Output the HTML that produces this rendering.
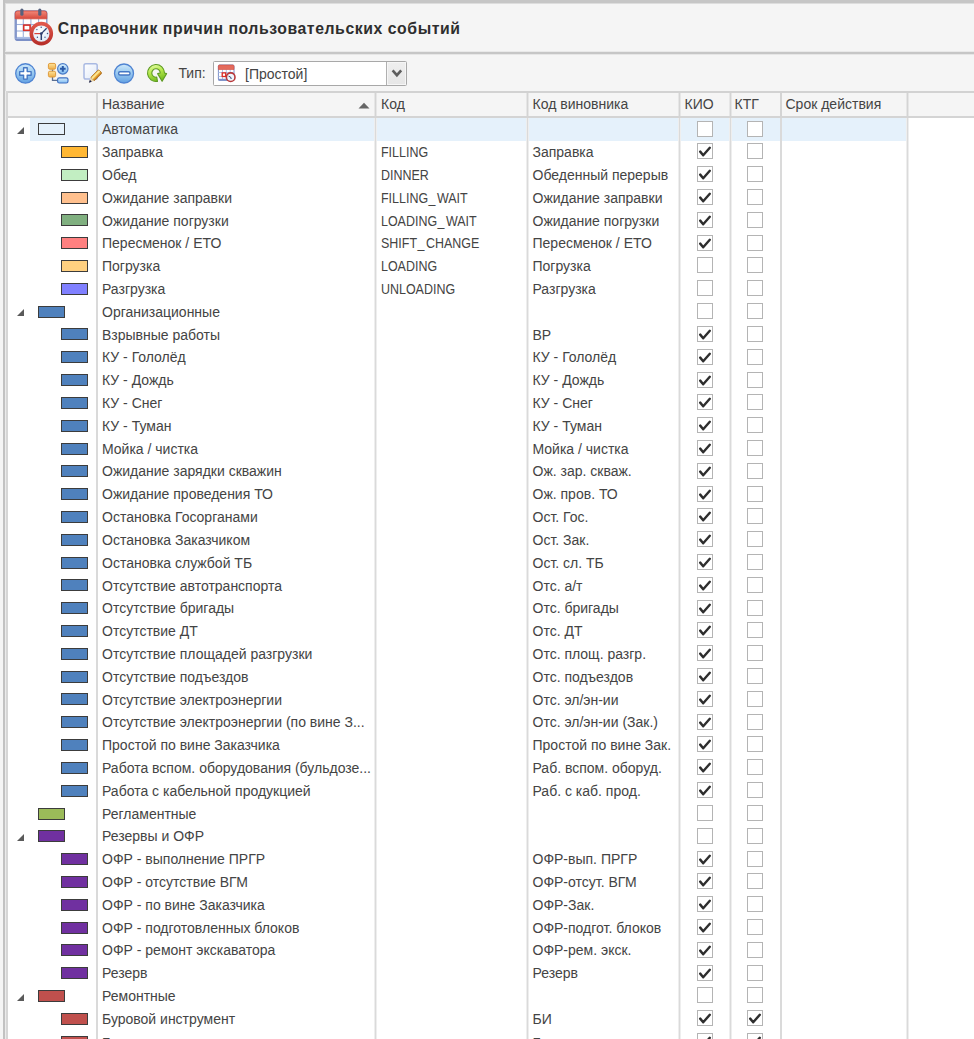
<!DOCTYPE html>
<html><head><meta charset="utf-8">
<style>
html,body{margin:0;padding:0}
body{width:974px;height:1039px;overflow:hidden;position:relative;background:#f5f5f5;font-family:"Liberation Sans",sans-serif;color:#333}
.a{position:absolute}
.p{position:absolute}
#title{position:absolute;left:57.8px;top:19.2px;font-weight:bold;font-size:15.8px;letter-spacing:0.56px;line-height:20px;color:#2e2e2e;white-space:nowrap}
#tip{position:absolute;left:178.4px;top:65px;font-size:14px;line-height:17px;color:#444}
#combo{position:absolute;left:213px;top:61px;width:192px;height:23px;border:1px solid #a8a8a8;background:#fff}
#combo .txt{position:absolute;left:31px;top:3.5px;font-size:14px;line-height:17px;color:#444}
#combo{border-radius:1.5px}
#combo .btn{position:absolute;left:172px;top:0;width:18.5px;height:23px;border-left:1.5px solid #b0b0b0;background:linear-gradient(#efefef,#e6e6e6);box-shadow:inset 0 0 0 1px #f6f6f6}
.hd{position:absolute;top:96px;font-size:14px;line-height:17px;color:#444;white-space:nowrap}
.selbg{position:absolute;left:30px;width:877px;height:23.3px;background:#e5f1fb}
.t{position:absolute;font-size:14px;line-height:23px;height:23px;color:#444;white-space:nowrap}
.code{transform:scaleX(0.89);transform-origin:0 0}
.us{letter-spacing:1.6px;margin-left:0.6px}
.box{position:absolute;width:25.3px;height:10px;border:1.2px solid #3c3c3c}
.tri{position:absolute;left:16.7px;width:0;height:0;border-left:7.5px solid transparent;border-bottom:7.2px solid #5a5a5a}
.cb{position:absolute;width:14px;height:14px;border:1.2px solid #b4b4b4;background:#fff}
.cb svg{position:absolute;left:-1px;top:-1px}
</style></head><body>
<div class="p" style="left:0px;top:0px;width:3px;height:1039px;background:#f5f5f5"></div>
<div class="p" style="left:3px;top:0px;width:971px;height:3px;background:#c6c6c6"></div>
<div class="p" style="left:3px;top:3px;width:971px;height:1px;background:#dddddd"></div>
<div class="p" style="left:3px;top:0px;width:2px;height:1039px;background:#c2c2c2"></div>
<div class="p" style="left:5px;top:4px;width:1px;height:87px;background:#dedede"></div>
<div class="p" style="left:5px;top:51px;width:969px;height:1px;background:#e9e9e9"></div>
<div class="p" style="left:5px;top:52px;width:969px;height:2px;background:#c6c6c6"></div>
<div class="p" style="left:5px;top:54px;width:969px;height:1px;background:#e6e6e6"></div>

<!-- title icon -->
<svg class="a" style="left:10px;top:5px" width="48" height="44" viewBox="0 0 48 44">
  <defs>
    <linearGradient id="calg" x1="0" y1="0" x2="0" y2="1"><stop offset="0" stop-color="#f2887a"/><stop offset="1" stop-color="#d6483c"/></linearGradient>
    <radialGradient id="clf" cx="0.45" cy="0.4" r="0.65"><stop offset="0" stop-color="#ffffff"/><stop offset="1" stop-color="#d6e6f6"/></radialGradient>
    <linearGradient id="ring" x1="0" y1="0" x2="0" y2="1"><stop offset="0" stop-color="#e0574c"/><stop offset="1" stop-color="#b8302a"/></linearGradient>
  </defs>
  <rect x="5.2" y="6" width="31.6" height="29.3" rx="2.5" fill="#fff" stroke="#7f93c8" stroke-width="1.3"/>
  <g stroke="#9fb2dc" stroke-width="1.1">
    <line x1="5.5" y1="19.5" x2="36.5" y2="19.5"/><line x1="5.5" y1="26" x2="36.5" y2="26"/>
    <line x1="13.3" y1="13.5" x2="13.3" y2="33"/><line x1="20.9" y1="13.5" x2="20.9" y2="33"/><line x1="28.6" y1="13.5" x2="28.6" y2="33"/>
  </g>
  <rect x="5.2" y="31.9" width="31.6" height="2" fill="#a9bde6"/><rect x="5.2" y="33.8" width="31.6" height="1.6" rx="0.8" fill="#7a8ec6"/>
  <rect x="5.2" y="13.5" width="1.7" height="20" fill="#8194c9"/>
  <path d="M5.2 13.8 V8.5 a2.5 2.5 0 0 1 2.5 -2.5 H34.3 a2.5 2.5 0 0 1 2.5 2.5 V13.8z" fill="url(#calg)" stroke="#d24a3e" stroke-width="0.8"/>
  <rect x="13.7" y="20.1" width="6.4" height="5.2" fill="none" stroke="#d8312a" stroke-width="1.6"/>
  <rect x="10.3" y="3.6" width="3.2" height="7.2" rx="1.6" fill="#56617e"/>
  <rect x="28.2" y="3.6" width="3.2" height="7.2" rx="1.6" fill="#56617e"/>
  <circle cx="31.3" cy="28.6" r="10" fill="url(#clf)" stroke="url(#ring)" stroke-width="3.6"/>
  <g fill="#3e5285"><circle cx="31.2" cy="22.2" r="0.75"/><circle cx="37.5" cy="28.6" r="0.75"/><circle cx="35" cy="32.3" r="0.7"/><circle cx="27.4" cy="32.3" r="0.7"/><circle cx="26.9" cy="24.6" r="0.7"/></g>
  <line x1="31.3" y1="28.6" x2="36.6" y2="23.2" stroke="#2f4170" stroke-width="1.3"/>
  <line x1="31.3" y1="28.6" x2="31.3" y2="35" stroke="#2f4170" stroke-width="1.5"/>
  <line x1="24.4" y1="28.6" x2="31.3" y2="28.6" stroke="#d8423a" stroke-width="1.2"/>
  <circle cx="31.3" cy="28.6" r="1.4" fill="#2f4170"/>
</svg>
<div id="title">Справочник причин пользовательских событий</div>

<!-- toolbar icons -->
<svg class="a" style="left:12px;top:60px" width="28" height="28" viewBox="0 0 28 28">
  <defs><linearGradient id="bl" x1="0" y1="0" x2="0" y2="1"><stop offset="0" stop-color="#cfe9fb"/><stop offset="0.45" stop-color="#9ccbf0"/><stop offset="1" stop-color="#62a0e2"/></linearGradient></defs>
  <circle cx="13.4" cy="13.45" r="9.7" fill="url(#bl)" stroke="#4f84d2" stroke-width="1.3"/>
  <path d="M11.6 7.7h3.6v3.9h3.9v3.6h-3.9v3.9h-3.6v-3.9h-3.9v-3.6h3.9z" fill="#fff" stroke="#4477c4" stroke-width="1.4" stroke-linejoin="round"/>
</svg>
<svg class="a" style="left:45px;top:60px" width="28" height="28" viewBox="0 0 28 28">
  <defs><linearGradient id="or" x1="0" y1="0" x2="0" y2="1"><stop offset="0" stop-color="#fde39a"/><stop offset="1" stop-color="#eeae4a"/></linearGradient>
  <linearGradient id="bl2" x1="0" y1="0" x2="0" y2="1"><stop offset="0" stop-color="#d6effd"/><stop offset="1" stop-color="#80baf0"/></linearGradient></defs>
  <path d="M7.5 9.5 V20.3 H12.5" fill="none" stroke="#5b6f92" stroke-width="1.3"/>
  <rect x="3.4" y="3.4" width="7.2" height="5.8" rx="1.5" fill="url(#or)" stroke="#e09a38" stroke-width="1"/>
  <rect x="3.4" y="11.2" width="7.2" height="5.8" rx="1.5" fill="url(#or)" stroke="#e09a38" stroke-width="1"/>
  <circle cx="17.8" cy="8.85" r="5.2" fill="url(#bl2)" stroke="#4a7cc8" stroke-width="1.2"/>
  <path d="M17.8 6v5.7M14.95 8.85h5.7" stroke="#2a5aa8" stroke-width="2"/>
  <rect x="12.6" y="17.8" width="10.4" height="5.2" rx="1.8" fill="url(#bl2)" stroke="#3f70c2" stroke-width="1.2"/>
</svg>
<svg class="a" style="left:78px;top:60px" width="28" height="28" viewBox="0 0 28 28">
  <defs><linearGradient id="pg" x1="0" y1="0" x2="1" y2="1"><stop offset="0" stop-color="#ffffff"/><stop offset="1" stop-color="#dfe8f7"/></linearGradient>
  <linearGradient id="pen" x1="0" y1="0" x2="0" y2="1"><stop offset="0" stop-color="#e8a838"/><stop offset="0.35" stop-color="#fff4a8"/><stop offset="0.6" stop-color="#eeb040"/><stop offset="1" stop-color="#b86a10"/></linearGradient></defs>
  <rect x="6" y="3.7" width="13.2" height="15.4" rx="1.8" fill="url(#pg)" stroke="#a9b9e2" stroke-width="1.5"/>
  <g transform="translate(11 22.6) rotate(-45)">
    <rect x="4.6" y="-2.5" width="11.4" height="5" rx="1.4" fill="url(#pen)" stroke="#a86a18" stroke-width="0.7"/>
    <path d="M4.8 -2.5 L0 0 L4.8 2.5z" fill="#e9d6ae"/>
    <path d="M2.6 -1.35 L-0.2 0 L2.6 1.35z" fill="#1b2350"/>
  </g>
</svg>
<svg class="a" style="left:110px;top:60px" width="28" height="28" viewBox="0 0 28 28">
  <circle cx="14" cy="13.5" r="9.5" fill="url(#bl)" stroke="#4f84d2" stroke-width="1.3"/>
  <rect x="8.6" y="11.7" width="11.4" height="3.3" rx="1.5" fill="#fff" stroke="#4477c4" stroke-width="1.4"/>
</svg>
<svg class="a" style="left:143px;top:60px" width="28" height="26" viewBox="0 0 28 26">
  <defs><linearGradient id="gr" x1="0" y1="0" x2="0.3" y2="1"><stop offset="0" stop-color="#e8ffb0"/><stop offset="0.5" stop-color="#b6e84c"/><stop offset="1" stop-color="#78be22"/></linearGradient></defs>
  <path d="M14.48 21.37 A8.5 8.5 0 1 1 21.5 13 L23.6 13.6 L19.1 21.3 L14.6 13.6 L17.2 13 A4.2 4.2 0 1 0 13.73 17.14 Z" fill="url(#gr)" stroke="#5d9a22" stroke-width="1.1" stroke-linejoin="round"/>
</svg>
<div id="tip">Тип:</div>
<div id="combo">
  <svg class="a" style="left:0px;top:0px" width="26" height="24" viewBox="0 0 26 24">
    <rect x="4.4" y="3" width="15.6" height="15.4" rx="1.2" fill="#fff" stroke="#7d90c8" stroke-width="1"/>
    <g stroke="#a8bde6" stroke-width="0.9"><line x1="4.5" y1="10.5" x2="20" y2="10.5"/><line x1="4.5" y1="14.5" x2="20" y2="14.5"/><line x1="8.5" y1="7.5" x2="8.5" y2="18"/><line x1="12.3" y1="7.5" x2="12.3" y2="18"/><line x1="16.2" y1="7.5" x2="16.2" y2="18"/></g>
    <rect x="4.4" y="16.8" width="15.6" height="1.8" fill="#7d90c8"/>
    <path d="M4.4 7.5 V4.2 a1.2 1.2 0 0 1 1.2 -1.2 H18.8 a1.2 1.2 0 0 1 1.2 1.2 V7.5z" fill="#e46a5c" stroke="#d04a3e" stroke-width="0.6"/>
    <rect x="8.2" y="10.9" width="3.5" height="3.6" fill="none" stroke="#e02a20" stroke-width="1.3"/>
    <circle cx="16.7" cy="15.2" r="4.3" fill="#eef6fc" stroke="#b8383a" stroke-width="1.6"/>
    <path d="M14.6 14.2 L16.7 15.2 L17.2 17" fill="none" stroke="#2f4170" stroke-width="1"/>
  </svg>
  <div class="txt">[Простой]</div>
  <div class="btn"><svg class="a" style="left:3.5px;top:7px" width="12" height="9" viewBox="0 0 12 9"><path d="M1.6 1.4L5.9 6.2L10.2 1.4" fill="none" stroke="#5e5e5e" stroke-width="2.6"/></svg></div>
</div>

<!-- grid -->
<div class="p" style="left:8px;top:118px;width:966px;height:921px;background:#ffffff"></div>
<div class="p" style="left:8px;top:93px;width:966px;height:23px;background:#f5f5f5"></div>
<div class="p" style="left:6px;top:91px;width:968px;height:2px;background:#d2d2d2"></div>
<div class="p" style="left:5px;top:91px;width:1px;height:948px;background:#ebebeb"></div>
<div class="p" style="left:6px;top:91px;width:2px;height:948px;background:#d6d6d6"></div>
<div class="p" style="left:8px;top:116px;width:966px;height:2px;background:#d4d4d4"></div>
<div class="p" style="left:96px;top:93px;width:2px;height:23px;background:#d4d4d4"></div>
<div class="p" style="left:375px;top:93px;width:1px;height:23px;background:#d4d4d4"></div>
<div class="p" style="left:374px;top:93px;width:1px;height:23px;background:#e6e6e6"></div>
<div class="p" style="left:376px;top:93px;width:1px;height:23px;background:#e6e6e6"></div>
<div class="p" style="left:527px;top:93px;width:1px;height:23px;background:#d4d4d4"></div>
<div class="p" style="left:526px;top:93px;width:1px;height:23px;background:#e6e6e6"></div>
<div class="p" style="left:528px;top:93px;width:1px;height:23px;background:#e6e6e6"></div>
<div class="p" style="left:679px;top:93px;width:1px;height:23px;background:#d4d4d4"></div>
<div class="p" style="left:678px;top:93px;width:1px;height:23px;background:#e6e6e6"></div>
<div class="p" style="left:680px;top:93px;width:1px;height:23px;background:#e6e6e6"></div>
<div class="p" style="left:730px;top:93px;width:1px;height:23px;background:#d4d4d4"></div>
<div class="p" style="left:729px;top:93px;width:1px;height:23px;background:#e6e6e6"></div>
<div class="p" style="left:731px;top:93px;width:1px;height:23px;background:#e6e6e6"></div>
<div class="p" style="left:780px;top:93px;width:2px;height:23px;background:#d4d4d4"></div>
<div class="p" style="left:907px;top:93px;width:1px;height:23px;background:#d4d4d4"></div>
<div class="p" style="left:906px;top:93px;width:1px;height:23px;background:#e6e6e6"></div>
<div class="p" style="left:908px;top:93px;width:1px;height:23px;background:#e6e6e6"></div>
<div class="hd" style="left:102px">Название</div>
<svg class="a" style="left:358px;top:101.5px" width="12" height="7" viewBox="0 0 12 7"><path d="M0.5 6.5L6 0.8L11.5 6.5z" fill="#666"/></svg>
<div class="hd" style="left:381px">Код</div>
<div class="hd" style="left:532.5px">Код виновника</div>
<div class="hd" style="left:684.5px">КИО</div>
<div class="hd" style="left:734.5px">КТГ</div>
<div class="hd" style="left:785.5px">Срок действия</div>
<div class="selbg" style="top:117.80px"></div><div class="tri" style="top:127.00px"></div><div class="box" style="left:38px;top:123.20px;background:transparent"></div><div class="t" style="left:102px;top:118.30px">Автоматика</div><div class="cb" style="left:697px;top:120.60px"></div><div class="cb" style="left:746.8px;top:120.60px"></div>
<div class="box" style="left:61px;top:146.01px;background:#ffb733"></div><div class="t" style="left:102px;top:141.11px">Заправка</div><div class="t code" style="left:381px;top:141.11px">FILLING</div><div class="t" style="left:532.5px;top:141.11px">Заправка</div><div class="cb" style="left:697px;top:143.41px"><svg width="16" height="16" viewBox="0 0 16 16"><path d="M3.2 8.6 L6.2 12.2 L12.8 4.8" fill="none" stroke="#2e2e2e" stroke-width="2.45" stroke-linecap="round" stroke-linejoin="round"/></svg></div><div class="cb" style="left:746.8px;top:143.41px"></div>
<div class="box" style="left:61px;top:168.82px;background:#c2eec2"></div><div class="t" style="left:102px;top:163.92px">Обед</div><div class="t code" style="left:381px;top:163.92px">DINNER</div><div class="t" style="left:532.5px;top:163.92px">Обеденный перерыв</div><div class="cb" style="left:697px;top:166.22px"><svg width="16" height="16" viewBox="0 0 16 16"><path d="M3.2 8.6 L6.2 12.2 L12.8 4.8" fill="none" stroke="#2e2e2e" stroke-width="2.45" stroke-linecap="round" stroke-linejoin="round"/></svg></div><div class="cb" style="left:746.8px;top:166.22px"></div>
<div class="box" style="left:61px;top:191.63px;background:#ffc08e"></div><div class="t" style="left:102px;top:186.73px">Ожидание заправки</div><div class="t code" style="left:381px;top:186.73px">FILLING<span class="us">_</span>WAIT</div><div class="t" style="left:532.5px;top:186.73px">Ожидание заправки</div><div class="cb" style="left:697px;top:189.03px"><svg width="16" height="16" viewBox="0 0 16 16"><path d="M3.2 8.6 L6.2 12.2 L12.8 4.8" fill="none" stroke="#2e2e2e" stroke-width="2.45" stroke-linecap="round" stroke-linejoin="round"/></svg></div><div class="cb" style="left:746.8px;top:189.03px"></div>
<div class="box" style="left:61px;top:214.44px;background:#80b080"></div><div class="t" style="left:102px;top:209.54px">Ожидание погрузки</div><div class="t code" style="left:381px;top:209.54px">LOADING<span class="us">_</span>WAIT</div><div class="t" style="left:532.5px;top:209.54px">Ожидание погрузки</div><div class="cb" style="left:697px;top:211.84px"><svg width="16" height="16" viewBox="0 0 16 16"><path d="M3.2 8.6 L6.2 12.2 L12.8 4.8" fill="none" stroke="#2e2e2e" stroke-width="2.45" stroke-linecap="round" stroke-linejoin="round"/></svg></div><div class="cb" style="left:746.8px;top:211.84px"></div>
<div class="box" style="left:61px;top:237.25px;background:#ff8080"></div><div class="t" style="left:102px;top:232.35px">Пересменок / ЕТО</div><div class="t code" style="left:381px;top:232.35px">SHIFT<span class="us">_</span>CHANGE</div><div class="t" style="left:532.5px;top:232.35px">Пересменок / ЕТО</div><div class="cb" style="left:697px;top:234.65px"><svg width="16" height="16" viewBox="0 0 16 16"><path d="M3.2 8.6 L6.2 12.2 L12.8 4.8" fill="none" stroke="#2e2e2e" stroke-width="2.45" stroke-linecap="round" stroke-linejoin="round"/></svg></div><div class="cb" style="left:746.8px;top:234.65px"></div>
<div class="box" style="left:61px;top:260.06px;background:#ffd080"></div><div class="t" style="left:102px;top:255.16px">Погрузка</div><div class="t code" style="left:381px;top:255.16px">LOADING</div><div class="t" style="left:532.5px;top:255.16px">Погрузка</div><div class="cb" style="left:697px;top:257.46px"></div><div class="cb" style="left:746.8px;top:257.46px"></div>
<div class="box" style="left:61px;top:282.87px;background:#8080ff"></div><div class="t" style="left:102px;top:277.97px">Разгрузка</div><div class="t code" style="left:381px;top:277.97px">UNLOADING</div><div class="t" style="left:532.5px;top:277.97px">Разгрузка</div><div class="cb" style="left:697px;top:280.27px"></div><div class="cb" style="left:746.8px;top:280.27px"></div>
<div class="tri" style="top:309.48px"></div><div class="box" style="left:38px;top:305.68px;background:#4f81bd"></div><div class="t" style="left:102px;top:300.78px">Организационные</div><div class="cb" style="left:697px;top:303.08px"></div><div class="cb" style="left:746.8px;top:303.08px"></div>
<div class="box" style="left:61px;top:328.49px;background:#4f81bd"></div><div class="t" style="left:102px;top:323.59px">Взрывные работы</div><div class="t" style="left:532.5px;top:323.59px">ВР</div><div class="cb" style="left:697px;top:325.89px"><svg width="16" height="16" viewBox="0 0 16 16"><path d="M3.2 8.6 L6.2 12.2 L12.8 4.8" fill="none" stroke="#2e2e2e" stroke-width="2.45" stroke-linecap="round" stroke-linejoin="round"/></svg></div><div class="cb" style="left:746.8px;top:325.89px"></div>
<div class="box" style="left:61px;top:351.30px;background:#4f81bd"></div><div class="t" style="left:102px;top:346.40px">КУ - Гололёд</div><div class="t" style="left:532.5px;top:346.40px">КУ - Гололёд</div><div class="cb" style="left:697px;top:348.70px"><svg width="16" height="16" viewBox="0 0 16 16"><path d="M3.2 8.6 L6.2 12.2 L12.8 4.8" fill="none" stroke="#2e2e2e" stroke-width="2.45" stroke-linecap="round" stroke-linejoin="round"/></svg></div><div class="cb" style="left:746.8px;top:348.70px"></div>
<div class="box" style="left:61px;top:374.11px;background:#4f81bd"></div><div class="t" style="left:102px;top:369.21px">КУ - Дождь</div><div class="t" style="left:532.5px;top:369.21px">КУ - Дождь</div><div class="cb" style="left:697px;top:371.51px"><svg width="16" height="16" viewBox="0 0 16 16"><path d="M3.2 8.6 L6.2 12.2 L12.8 4.8" fill="none" stroke="#2e2e2e" stroke-width="2.45" stroke-linecap="round" stroke-linejoin="round"/></svg></div><div class="cb" style="left:746.8px;top:371.51px"></div>
<div class="box" style="left:61px;top:396.92px;background:#4f81bd"></div><div class="t" style="left:102px;top:392.02px">КУ - Снег</div><div class="t" style="left:532.5px;top:392.02px">КУ - Снег</div><div class="cb" style="left:697px;top:394.32px"><svg width="16" height="16" viewBox="0 0 16 16"><path d="M3.2 8.6 L6.2 12.2 L12.8 4.8" fill="none" stroke="#2e2e2e" stroke-width="2.45" stroke-linecap="round" stroke-linejoin="round"/></svg></div><div class="cb" style="left:746.8px;top:394.32px"></div>
<div class="box" style="left:61px;top:419.73px;background:#4f81bd"></div><div class="t" style="left:102px;top:414.83px">КУ - Туман</div><div class="t" style="left:532.5px;top:414.83px">КУ - Туман</div><div class="cb" style="left:697px;top:417.13px"><svg width="16" height="16" viewBox="0 0 16 16"><path d="M3.2 8.6 L6.2 12.2 L12.8 4.8" fill="none" stroke="#2e2e2e" stroke-width="2.45" stroke-linecap="round" stroke-linejoin="round"/></svg></div><div class="cb" style="left:746.8px;top:417.13px"></div>
<div class="box" style="left:61px;top:442.54px;background:#4f81bd"></div><div class="t" style="left:102px;top:437.64px">Мойка / чистка</div><div class="t" style="left:532.5px;top:437.64px">Мойка / чистка</div><div class="cb" style="left:697px;top:439.94px"><svg width="16" height="16" viewBox="0 0 16 16"><path d="M3.2 8.6 L6.2 12.2 L12.8 4.8" fill="none" stroke="#2e2e2e" stroke-width="2.45" stroke-linecap="round" stroke-linejoin="round"/></svg></div><div class="cb" style="left:746.8px;top:439.94px"></div>
<div class="box" style="left:61px;top:465.35px;background:#4f81bd"></div><div class="t" style="left:102px;top:460.45px">Ожидание зарядки скважин</div><div class="t" style="left:532.5px;top:460.45px">Ож. зар. скваж.</div><div class="cb" style="left:697px;top:462.75px"><svg width="16" height="16" viewBox="0 0 16 16"><path d="M3.2 8.6 L6.2 12.2 L12.8 4.8" fill="none" stroke="#2e2e2e" stroke-width="2.45" stroke-linecap="round" stroke-linejoin="round"/></svg></div><div class="cb" style="left:746.8px;top:462.75px"></div>
<div class="box" style="left:61px;top:488.16px;background:#4f81bd"></div><div class="t" style="left:102px;top:483.26px">Ожидание проведения ТО</div><div class="t" style="left:532.5px;top:483.26px">Ож. пров. ТО</div><div class="cb" style="left:697px;top:485.56px"><svg width="16" height="16" viewBox="0 0 16 16"><path d="M3.2 8.6 L6.2 12.2 L12.8 4.8" fill="none" stroke="#2e2e2e" stroke-width="2.45" stroke-linecap="round" stroke-linejoin="round"/></svg></div><div class="cb" style="left:746.8px;top:485.56px"></div>
<div class="box" style="left:61px;top:510.97px;background:#4f81bd"></div><div class="t" style="left:102px;top:506.07px">Остановка Госорганами</div><div class="t" style="left:532.5px;top:506.07px">Ост. Гос.</div><div class="cb" style="left:697px;top:508.37px"><svg width="16" height="16" viewBox="0 0 16 16"><path d="M3.2 8.6 L6.2 12.2 L12.8 4.8" fill="none" stroke="#2e2e2e" stroke-width="2.45" stroke-linecap="round" stroke-linejoin="round"/></svg></div><div class="cb" style="left:746.8px;top:508.37px"></div>
<div class="box" style="left:61px;top:533.78px;background:#4f81bd"></div><div class="t" style="left:102px;top:528.88px">Остановка Заказчиком</div><div class="t" style="left:532.5px;top:528.88px">Ост. Зак.</div><div class="cb" style="left:697px;top:531.18px"><svg width="16" height="16" viewBox="0 0 16 16"><path d="M3.2 8.6 L6.2 12.2 L12.8 4.8" fill="none" stroke="#2e2e2e" stroke-width="2.45" stroke-linecap="round" stroke-linejoin="round"/></svg></div><div class="cb" style="left:746.8px;top:531.18px"></div>
<div class="box" style="left:61px;top:556.59px;background:#4f81bd"></div><div class="t" style="left:102px;top:551.69px">Остановка службой ТБ</div><div class="t" style="left:532.5px;top:551.69px">Ост. сл. ТБ</div><div class="cb" style="left:697px;top:553.99px"><svg width="16" height="16" viewBox="0 0 16 16"><path d="M3.2 8.6 L6.2 12.2 L12.8 4.8" fill="none" stroke="#2e2e2e" stroke-width="2.45" stroke-linecap="round" stroke-linejoin="round"/></svg></div><div class="cb" style="left:746.8px;top:553.99px"></div>
<div class="box" style="left:61px;top:579.40px;background:#4f81bd"></div><div class="t" style="left:102px;top:574.50px">Отсутствие автотранспорта</div><div class="t" style="left:532.5px;top:574.50px">Отс. а/т</div><div class="cb" style="left:697px;top:576.80px"><svg width="16" height="16" viewBox="0 0 16 16"><path d="M3.2 8.6 L6.2 12.2 L12.8 4.8" fill="none" stroke="#2e2e2e" stroke-width="2.45" stroke-linecap="round" stroke-linejoin="round"/></svg></div><div class="cb" style="left:746.8px;top:576.80px"></div>
<div class="box" style="left:61px;top:602.21px;background:#4f81bd"></div><div class="t" style="left:102px;top:597.31px">Отсутствие бригады</div><div class="t" style="left:532.5px;top:597.31px">Отс. бригады</div><div class="cb" style="left:697px;top:599.61px"><svg width="16" height="16" viewBox="0 0 16 16"><path d="M3.2 8.6 L6.2 12.2 L12.8 4.8" fill="none" stroke="#2e2e2e" stroke-width="2.45" stroke-linecap="round" stroke-linejoin="round"/></svg></div><div class="cb" style="left:746.8px;top:599.61px"></div>
<div class="box" style="left:61px;top:625.02px;background:#4f81bd"></div><div class="t" style="left:102px;top:620.12px">Отсутствие ДТ</div><div class="t" style="left:532.5px;top:620.12px">Отс. ДТ</div><div class="cb" style="left:697px;top:622.42px"><svg width="16" height="16" viewBox="0 0 16 16"><path d="M3.2 8.6 L6.2 12.2 L12.8 4.8" fill="none" stroke="#2e2e2e" stroke-width="2.45" stroke-linecap="round" stroke-linejoin="round"/></svg></div><div class="cb" style="left:746.8px;top:622.42px"></div>
<div class="box" style="left:61px;top:647.83px;background:#4f81bd"></div><div class="t" style="left:102px;top:642.93px">Отсутствие площадей разгрузки</div><div class="t" style="left:532.5px;top:642.93px">Отс. площ. разгр.</div><div class="cb" style="left:697px;top:645.23px"><svg width="16" height="16" viewBox="0 0 16 16"><path d="M3.2 8.6 L6.2 12.2 L12.8 4.8" fill="none" stroke="#2e2e2e" stroke-width="2.45" stroke-linecap="round" stroke-linejoin="round"/></svg></div><div class="cb" style="left:746.8px;top:645.23px"></div>
<div class="box" style="left:61px;top:670.64px;background:#4f81bd"></div><div class="t" style="left:102px;top:665.74px">Отсутствие подъездов</div><div class="t" style="left:532.5px;top:665.74px">Отс. подъездов</div><div class="cb" style="left:697px;top:668.04px"><svg width="16" height="16" viewBox="0 0 16 16"><path d="M3.2 8.6 L6.2 12.2 L12.8 4.8" fill="none" stroke="#2e2e2e" stroke-width="2.45" stroke-linecap="round" stroke-linejoin="round"/></svg></div><div class="cb" style="left:746.8px;top:668.04px"></div>
<div class="box" style="left:61px;top:693.45px;background:#4f81bd"></div><div class="t" style="left:102px;top:688.55px">Отсутствие электроэнергии</div><div class="t" style="left:532.5px;top:688.55px">Отс. эл/эн-ии</div><div class="cb" style="left:697px;top:690.85px"><svg width="16" height="16" viewBox="0 0 16 16"><path d="M3.2 8.6 L6.2 12.2 L12.8 4.8" fill="none" stroke="#2e2e2e" stroke-width="2.45" stroke-linecap="round" stroke-linejoin="round"/></svg></div><div class="cb" style="left:746.8px;top:690.85px"></div>
<div class="box" style="left:61px;top:716.26px;background:#4f81bd"></div><div class="t" style="left:102px;top:711.36px">Отсутствие электроэнергии (по вине З...</div><div class="t" style="left:532.5px;top:711.36px">Отс. эл/эн-ии (Зак.)</div><div class="cb" style="left:697px;top:713.66px"><svg width="16" height="16" viewBox="0 0 16 16"><path d="M3.2 8.6 L6.2 12.2 L12.8 4.8" fill="none" stroke="#2e2e2e" stroke-width="2.45" stroke-linecap="round" stroke-linejoin="round"/></svg></div><div class="cb" style="left:746.8px;top:713.66px"></div>
<div class="box" style="left:61px;top:739.07px;background:#4f81bd"></div><div class="t" style="left:102px;top:734.17px">Простой по вине Заказчика</div><div class="t" style="left:532.5px;top:734.17px">Простой по вине Зак.</div><div class="cb" style="left:697px;top:736.47px"><svg width="16" height="16" viewBox="0 0 16 16"><path d="M3.2 8.6 L6.2 12.2 L12.8 4.8" fill="none" stroke="#2e2e2e" stroke-width="2.45" stroke-linecap="round" stroke-linejoin="round"/></svg></div><div class="cb" style="left:746.8px;top:736.47px"></div>
<div class="box" style="left:61px;top:761.88px;background:#4f81bd"></div><div class="t" style="left:102px;top:756.98px">Работа вспом. оборудования (бульдозе...</div><div class="t" style="left:532.5px;top:756.98px">Раб. вспом. оборуд.</div><div class="cb" style="left:697px;top:759.28px"><svg width="16" height="16" viewBox="0 0 16 16"><path d="M3.2 8.6 L6.2 12.2 L12.8 4.8" fill="none" stroke="#2e2e2e" stroke-width="2.45" stroke-linecap="round" stroke-linejoin="round"/></svg></div><div class="cb" style="left:746.8px;top:759.28px"></div>
<div class="box" style="left:61px;top:784.69px;background:#4f81bd"></div><div class="t" style="left:102px;top:779.79px">Работа с кабельной продукцией</div><div class="t" style="left:532.5px;top:779.79px">Раб. с каб. прод.</div><div class="cb" style="left:697px;top:782.09px"><svg width="16" height="16" viewBox="0 0 16 16"><path d="M3.2 8.6 L6.2 12.2 L12.8 4.8" fill="none" stroke="#2e2e2e" stroke-width="2.45" stroke-linecap="round" stroke-linejoin="round"/></svg></div><div class="cb" style="left:746.8px;top:782.09px"></div>
<div class="box" style="left:38px;top:807.50px;background:#9bbb59"></div><div class="t" style="left:102px;top:802.60px">Регламентные</div><div class="cb" style="left:697px;top:804.90px"></div><div class="cb" style="left:746.8px;top:804.90px"></div>
<div class="tri" style="top:834.11px"></div><div class="box" style="left:38px;top:830.31px;background:#7030a0"></div><div class="t" style="left:102px;top:825.41px">Резервы и ОФР</div><div class="cb" style="left:697px;top:827.71px"></div><div class="cb" style="left:746.8px;top:827.71px"></div>
<div class="box" style="left:61px;top:853.12px;background:#7030a0"></div><div class="t" style="left:102px;top:848.22px">ОФР - выполнение ПРГР</div><div class="t" style="left:532.5px;top:848.22px">ОФР-вып. ПРГР</div><div class="cb" style="left:697px;top:850.52px"><svg width="16" height="16" viewBox="0 0 16 16"><path d="M3.2 8.6 L6.2 12.2 L12.8 4.8" fill="none" stroke="#2e2e2e" stroke-width="2.45" stroke-linecap="round" stroke-linejoin="round"/></svg></div><div class="cb" style="left:746.8px;top:850.52px"></div>
<div class="box" style="left:61px;top:875.93px;background:#7030a0"></div><div class="t" style="left:102px;top:871.03px">ОФР - отсутствие ВГМ</div><div class="t" style="left:532.5px;top:871.03px">ОФР-отсут. ВГМ</div><div class="cb" style="left:697px;top:873.33px"><svg width="16" height="16" viewBox="0 0 16 16"><path d="M3.2 8.6 L6.2 12.2 L12.8 4.8" fill="none" stroke="#2e2e2e" stroke-width="2.45" stroke-linecap="round" stroke-linejoin="round"/></svg></div><div class="cb" style="left:746.8px;top:873.33px"></div>
<div class="box" style="left:61px;top:898.74px;background:#7030a0"></div><div class="t" style="left:102px;top:893.84px">ОФР - по вине Заказчика</div><div class="t" style="left:532.5px;top:893.84px">ОФР-Зак.</div><div class="cb" style="left:697px;top:896.14px"><svg width="16" height="16" viewBox="0 0 16 16"><path d="M3.2 8.6 L6.2 12.2 L12.8 4.8" fill="none" stroke="#2e2e2e" stroke-width="2.45" stroke-linecap="round" stroke-linejoin="round"/></svg></div><div class="cb" style="left:746.8px;top:896.14px"></div>
<div class="box" style="left:61px;top:921.55px;background:#7030a0"></div><div class="t" style="left:102px;top:916.65px">ОФР - подготовленных блоков</div><div class="t" style="left:532.5px;top:916.65px">ОФР-подгот. блоков</div><div class="cb" style="left:697px;top:918.95px"><svg width="16" height="16" viewBox="0 0 16 16"><path d="M3.2 8.6 L6.2 12.2 L12.8 4.8" fill="none" stroke="#2e2e2e" stroke-width="2.45" stroke-linecap="round" stroke-linejoin="round"/></svg></div><div class="cb" style="left:746.8px;top:918.95px"></div>
<div class="box" style="left:61px;top:944.36px;background:#7030a0"></div><div class="t" style="left:102px;top:939.46px">ОФР - ремонт экскаватора</div><div class="t" style="left:532.5px;top:939.46px">ОФР-рем. экск.</div><div class="cb" style="left:697px;top:941.76px"><svg width="16" height="16" viewBox="0 0 16 16"><path d="M3.2 8.6 L6.2 12.2 L12.8 4.8" fill="none" stroke="#2e2e2e" stroke-width="2.45" stroke-linecap="round" stroke-linejoin="round"/></svg></div><div class="cb" style="left:746.8px;top:941.76px"></div>
<div class="box" style="left:61px;top:967.17px;background:#7030a0"></div><div class="t" style="left:102px;top:962.27px">Резерв</div><div class="t" style="left:532.5px;top:962.27px">Резерв</div><div class="cb" style="left:697px;top:964.57px"><svg width="16" height="16" viewBox="0 0 16 16"><path d="M3.2 8.6 L6.2 12.2 L12.8 4.8" fill="none" stroke="#2e2e2e" stroke-width="2.45" stroke-linecap="round" stroke-linejoin="round"/></svg></div><div class="cb" style="left:746.8px;top:964.57px"></div>
<div class="tri" style="top:993.78px"></div><div class="box" style="left:38px;top:989.98px;background:#c0504d"></div><div class="t" style="left:102px;top:985.08px">Ремонтные</div><div class="cb" style="left:697px;top:987.38px"></div><div class="cb" style="left:746.8px;top:987.38px"></div>
<div class="box" style="left:61px;top:1012.79px;background:#c0504d"></div><div class="t" style="left:102px;top:1007.89px">Буровой инструмент</div><div class="t" style="left:532.5px;top:1007.89px">БИ</div><div class="cb" style="left:697px;top:1010.19px"><svg width="16" height="16" viewBox="0 0 16 16"><path d="M3.2 8.6 L6.2 12.2 L12.8 4.8" fill="none" stroke="#2e2e2e" stroke-width="2.45" stroke-linecap="round" stroke-linejoin="round"/></svg></div><div class="cb" style="left:746.8px;top:1010.19px"><svg width="16" height="16" viewBox="0 0 16 16"><path d="M3.2 8.6 L6.2 12.2 L12.8 4.8" fill="none" stroke="#2e2e2e" stroke-width="2.45" stroke-linecap="round" stroke-linejoin="round"/></svg></div>
<div class="box" style="left:61px;top:1035.60px;background:#c0504d"></div><div class="t" style="left:102px;top:1031.50px">Буровая установка</div><div class="t" style="left:532.5px;top:1031.50px">Бур. уст.</div><div class="cb" style="left:697px;top:1033.00px"><svg width="16" height="16" viewBox="0 0 16 16"><path d="M3.2 8.6 L6.2 12.2 L12.8 4.8" fill="none" stroke="#2e2e2e" stroke-width="2.45" stroke-linecap="round" stroke-linejoin="round"/></svg></div><div class="cb" style="left:746.8px;top:1033.00px"><svg width="16" height="16" viewBox="0 0 16 16"><path d="M3.2 8.6 L6.2 12.2 L12.8 4.8" fill="none" stroke="#2e2e2e" stroke-width="2.45" stroke-linecap="round" stroke-linejoin="round"/></svg></div>
<div class="p" style="left:96px;top:118px;width:2px;height:921px;background:#dadada"></div>
<div class="p" style="left:375px;top:118px;width:1px;height:921px;background:#dadada"></div>
<div class="p" style="left:374px;top:118px;width:1px;height:921px;background:#eeeeee"></div>
<div class="p" style="left:376px;top:118px;width:1px;height:921px;background:#eeeeee"></div>
<div class="p" style="left:527px;top:118px;width:1px;height:921px;background:#dadada"></div>
<div class="p" style="left:526px;top:118px;width:1px;height:921px;background:#eeeeee"></div>
<div class="p" style="left:528px;top:118px;width:1px;height:921px;background:#eeeeee"></div>
<div class="p" style="left:679px;top:118px;width:1px;height:921px;background:#dadada"></div>
<div class="p" style="left:678px;top:118px;width:1px;height:921px;background:#eeeeee"></div>
<div class="p" style="left:680px;top:118px;width:1px;height:921px;background:#eeeeee"></div>
<div class="p" style="left:730px;top:118px;width:1px;height:921px;background:#dadada"></div>
<div class="p" style="left:729px;top:118px;width:1px;height:921px;background:#eeeeee"></div>
<div class="p" style="left:731px;top:118px;width:1px;height:921px;background:#eeeeee"></div>
<div class="p" style="left:780px;top:118px;width:2px;height:921px;background:#dadada"></div>
<div class="p" style="left:907px;top:118px;width:1px;height:921px;background:#dadada"></div>
<div class="p" style="left:906px;top:118px;width:1px;height:921px;background:#eeeeee"></div>
<div class="p" style="left:908px;top:118px;width:1px;height:921px;background:#eeeeee"></div>
</body></html>
